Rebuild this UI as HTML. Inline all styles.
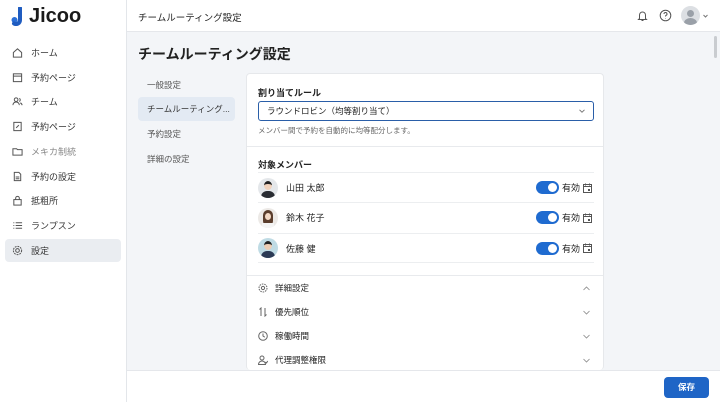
<!DOCTYPE html>
<html><head><meta charset="utf-8"><style>
*{box-sizing:border-box;margin:0;padding:0}
body{width:720px;height:402px;overflow:hidden;font-family:"Liberation Sans","Noto Sans CJK JP",sans-serif;background:#f3f5f8;color:#222;position:relative;font-size:9px}
.side{position:absolute;left:0;top:0;width:127px;height:402px;background:#fff;border-right:1px solid #e3e6ea}
.logo{position:absolute;left:11px;top:5px;font-size:20px;font-weight:bold;color:#1a1a1a;display:flex;align-items:center;gap:4px}
.item{position:absolute;left:5px;width:116px;height:23px;display:flex;align-items:center;padding-left:7px;gap:8px;color:#333;font-size:9px;border-radius:4px}
.item svg{width:11px;height:11px;stroke:#555;fill:none;stroke-width:1.1}
.top{position:absolute;left:127px;top:0;right:0;height:32px;background:#fff;border-bottom:1px solid #e5e7eb}
.top .t{position:absolute;left:11px;top:10px;font-size:9.5px}
h1{position:absolute;left:138px;top:44px;font-size:14px;font-weight:bold}
.sub{position:absolute;left:138px;width:97px;height:24px;padding-left:9px;line-height:24px;font-size:8.5px;color:#555;border-radius:4px}
.card{position:absolute;left:246px;top:73px;width:358px;height:297px;background:#fff;border:1px solid #e6e8eb;border-radius:4px;border-bottom:none;overflow:hidden}
.lbl{position:absolute;left:11px;font-size:9px;font-weight:bold;color:#222}
.sel{position:absolute;left:11px;top:27px;width:336px;height:20px;border:1px solid #2a5ea8;border-radius:3px;padding-left:8px;line-height:18px;font-size:8.5px}
.row{position:absolute;left:11px;width:336px;height:30px;border-top:1px solid #eceef0;display:flex;align-items:center}
.av{width:20px;height:20px;border-radius:50%;background:#e4e7ea;margin-right:8px;position:relative;overflow:hidden}
.tog{position:absolute;right:35px;width:23px;height:13px;background:#1f6bd0;border-radius:7px}
.tog:after{content:"";position:absolute;right:2px;top:2px;width:9px;height:9px;border-radius:50%;background:#fff}
.cal{position:absolute;right:2px;width:9px;height:10px}
.acc{position:absolute;left:11px;width:336px;height:24px;display:flex;align-items:center;gap:7px;font-size:8.5px}
.acc svg{width:10px;height:10px;fill:none;stroke:#666;stroke-width:1}
.acc .chev{position:absolute;right:4px;top:10px;width:7px;height:5px;stroke:#888;stroke-width:.8}
.foot{position:absolute;left:127px;top:370px;right:0;height:32px;background:#fff;border-top:1px solid #e5e7eb}
.btn{position:absolute;left:537px;top:6px;width:45px;height:21px;background:#1f65c6;color:#fff;border-radius:4px;text-align:center;line-height:21px;font-size:8.5px;font-weight:bold}
</style></head><body>
<div class="side">
<div class="logo"><svg width="14" height="19" viewBox="0 0 14 19"><circle cx="3.5" cy="13" r="3" fill="#2b6fd6"/><path d="M9 1v12a4 4 0 0 1-6 3.5" stroke="#1f5cc0" stroke-width="4" fill="none" stroke-linecap="round"/></svg>Jicoo</div>
<div class="item" style="top:41px"><svg viewBox="0 0 12 12"><path d="M1.5 6L6 2l4.5 4v5h-9z"/></svg>ホーム</div>
<div class="item" style="top:66px"><svg viewBox="0 0 12 12"><rect x="1.5" y="2" width="9" height="8.5"/><path d="M1.5 4.5h9"/></svg>予約ページ</div>
<div class="item" style="top:90px"><svg viewBox="0 0 12 12"><circle cx="4.5" cy="4" r="2"/><path d="M1 10a3.5 3.5 0 0 1 7 0M8 2.5a2 2 0 0 1 0 3.5M9 7.5a3 3 0 0 1 2 2.5"/></svg>チーム</div>
<div class="item" style="top:115px"><svg viewBox="0 0 12 12"><rect x="2" y="1.5" width="8" height="9"/><path d="M4.5 7.5l3-3"/></svg>予約ページ</div>
<div class="item" style="top:140px;color:#888"><svg viewBox="0 0 12 12"><path d="M1 3h4l1 1h5v6H1z"/></svg>メキカ制統</div>
<div class="item" style="top:165px"><svg viewBox="0 0 12 12"><path d="M2.5 1.5h5l2 2v7h-7z M4 6.5h4M4 8.5h4"/></svg>予約の設定</div>
<div class="item" style="top:189px"><svg viewBox="0 0 12 12"><rect x="2" y="5" width="8" height="6"/><path d="M4 5V3.5a2 2 0 0 1 4 0V5"/></svg>抵粗所</div>
<div class="item" style="top:214px"><svg viewBox="0 0 12 12"><path d="M1.5 3h1M4 3h7M1.5 6h1M4 6h7M1.5 9h1M4 9h7"/></svg>ランプスン</div>
<div class="item" style="top:239px;background:#eaedf1"><svg viewBox="0 0 12 12"><circle cx="6" cy="6" r="2"/><circle cx="6" cy="6" r="4.5" stroke-dasharray="2 1"/></svg>設定</div>
</div>
<div class="top"><div class="t">チームルーティング設定</div>
<svg style="position:absolute;left:510px;top:10px" width="11" height="12" viewBox="0 0 11 12" fill="none" stroke="#555"><path d="M2.5 8.5V5a3 3 0 0 1 6 0v3.5l1 1h-8zM4.5 10.5h2"/></svg>
<svg style="position:absolute;left:532px;top:9px" width="13" height="13" viewBox="0 0 13 13" fill="none" stroke="#555"><circle cx="6.5" cy="6.5" r="5.3"/><path d="M5 5a1.5 1.5 0 1 1 2 1.4c-.5.2-.5.6-.5 1.1M6.5 9.3v.3"/></svg>
<div style="position:absolute;left:554px;top:6px;width:19px;height:19px;border-radius:50%;background:#dcdfe3;overflow:hidden"><div style="position:absolute;left:6px;top:4px;width:7px;height:7px;border-radius:50%;background:#9aa0a8"></div><div style="position:absolute;left:3px;top:12px;width:13px;height:10px;border-radius:50%;background:#9aa0a8"></div></div>
<svg style="position:absolute;left:576px;top:14px" width="5" height="4" viewBox="0 0 5 4" fill="none" stroke="#777"><path d="M.5 1l2 2 2-2"/></svg>
</div>
<h1>チームルーティング設定</h1>
<div class="sub" style="top:73px">一般設定</div>
<div class="sub" style="top:97px;background:#e3eaf3;color:#333">チームルーティング...</div>
<div class="sub" style="top:122px">予約設定</div>
<div class="sub" style="top:147px">詳細の設定</div>
<div class="card">
<div class="lbl" style="top:12px">割り当てルール</div>
<div class="sel">ラウンドロビン（均等割り当て）<svg style="position:absolute;right:8px;top:7px" width="6" height="4" viewBox="0 0 6 4" fill="none" stroke="#777"><path d="M.5 .8l2.5 2.4L5.5 .8"/></svg></div>
<div style="position:absolute;left:11px;top:51px;font-size:7.5px;color:#666">メンバー間で予約を自動的に均等配分します。</div>
<div style="position:absolute;left:0;right:0;top:72px;border-top:1px solid #e8eaed"></div>
<div class="lbl" style="top:84px">対象メンバー</div>
<div class="row" style="top:98px"><div class="av"><div style="position:absolute;left:6px;top:3px;width:8px;height:9px;border-radius:50%;background:#f0d2bc;border-top:3px solid #222"></div><div style="position:absolute;left:3px;top:13px;width:14px;height:9px;border-radius:6px 6px 0 0;background:#2a2d33"></div></div>山田 太郎<div class="tog"></div><span style="position:absolute;right:14px">有効</span><svg class="cal" viewBox="0 0 9 10" fill="none" stroke="#555"><rect x=".5" y="1.5" width="8" height="8"/><path d="M.5 3.5h8M2.5 .5v2M6.5 .5v2"/><rect x="5" y="6" width="2" height="2" fill="#555" stroke="none"/></svg></div>
<div class="row" style="top:128px"><div class="av" style="background:#ece9e6"><div style="position:absolute;left:5px;top:2px;width:10px;height:16px;border-radius:5px;background:#5a3d2c"></div><div style="position:absolute;left:7px;top:5px;width:6px;height:7px;border-radius:50%;background:#f3d8c4"></div><div style="position:absolute;left:4px;top:15px;width:12px;height:6px;background:#f4f4f4"></div></div>鈴木 花子<div class="tog"></div><span style="position:absolute;right:14px">有効</span><svg class="cal" viewBox="0 0 9 10" fill="none" stroke="#555"><rect x=".5" y="1.5" width="8" height="8"/><path d="M.5 3.5h8M2.5 .5v2M6.5 .5v2"/><rect x="5" y="6" width="2" height="2" fill="#555" stroke="none"/></svg></div>
<div class="row" style="top:159px;border-bottom:1px solid #eceef0"><div class="av" style="background:#bfdbe4"><div style="position:absolute;left:6px;top:3px;width:8px;height:9px;border-radius:50%;background:#eccdb4;border-top:3px solid #222"></div><div style="position:absolute;left:3px;top:13px;width:14px;height:9px;border-radius:6px 6px 0 0;background:#2b3a55"></div></div>佐藤 健<div class="tog"></div><span style="position:absolute;right:14px">有効</span><svg class="cal" viewBox="0 0 9 10" fill="none" stroke="#555"><rect x=".5" y="1.5" width="8" height="8"/><path d="M.5 3.5h8M2.5 .5v2M6.5 .5v2"/><rect x="5" y="6" width="2" height="2" fill="#555" stroke="none"/></svg></div>
<div style="position:absolute;left:0;right:0;top:201px;border-top:1px solid #e8eaed"></div>
<div class="acc" style="top:202px"><svg viewBox="0 0 10 10"><circle cx="5" cy="5" r="1.6"/><circle cx="5" cy="5" r="4" stroke-dasharray="1.6 .9"/></svg>詳細設定<svg class="chev" viewBox="0 0 7 5"><path d="M.5 4L3.5 1l3 3"/></svg></div>
<div class="acc" style="top:226px"><svg viewBox="0 0 10 10"><path d="M3 9V1L1.5 2.5M7 1v8l1.5-1.5"/></svg>優先順位<svg class="chev" viewBox="0 0 7 5"><path d="M.5 1l3 3 3-3"/></svg></div>
<div class="acc" style="top:250px"><svg viewBox="0 0 10 10"><circle cx="5" cy="5" r="4.3"/><path d="M5 2.5V5l1.8 1.2"/></svg>稼働時間<svg class="chev" viewBox="0 0 7 5"><path d="M.5 1l3 3 3-3"/></svg></div>
<div class="acc" style="top:274px"><svg viewBox="0 0 10 10"><circle cx="4" cy="3" r="2"/><path d="M.5 9.5a3.5 3.5 0 0 1 7 0zM7.5 7l1 1 1.2-2"/></svg>代理調整権限<svg class="chev" viewBox="0 0 7 5"><path d="M.5 1l3 3 3-3"/></svg></div>
</div>
<div style="position:absolute;left:714px;top:36px;width:3px;height:22px;background:#c9ccd0;border-radius:2px"></div>
<div class="foot"><div class="btn">保存</div></div>
</body></html>
